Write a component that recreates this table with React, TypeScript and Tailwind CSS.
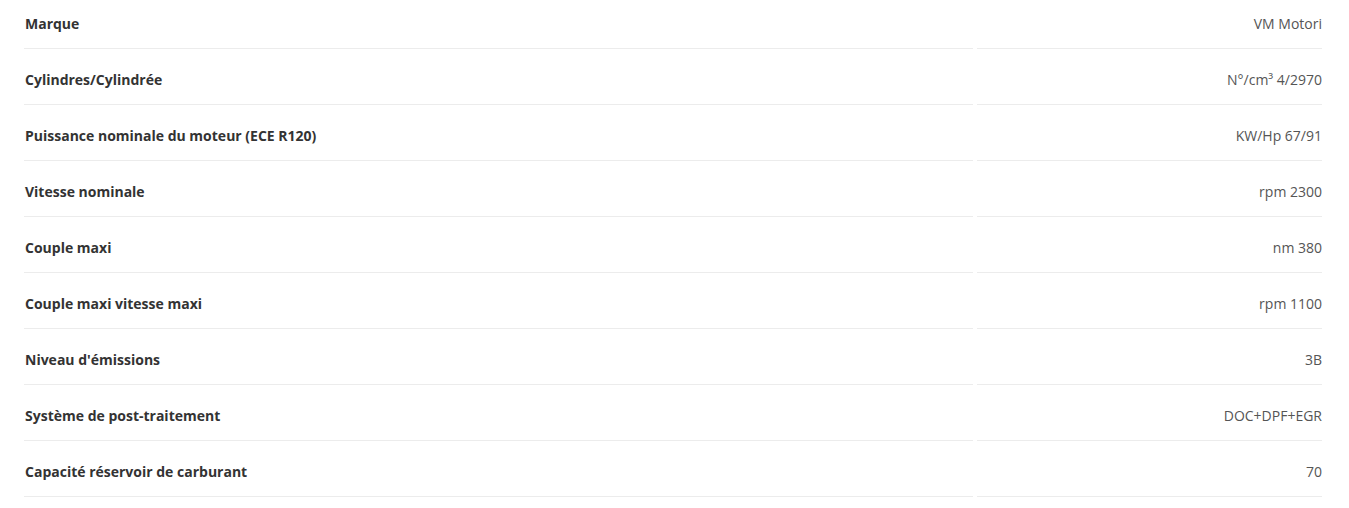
const specs = [
  { label: 'Marque', value: 'VM Motori' },
  { label: 'Cylindres/Cylindrée', value: 'N°/cm³ 4/2970' },
  { label: 'Puissance nominale du moteur (ECE R120)', value: 'KW/Hp 67/91' },
  { label: 'Vitesse nominale', value: 'rpm 2300' },
  { label: 'Couple maxi', value: 'nm 380' },
  { label: 'Couple maxi vitesse maxi', value: 'rpm 1100' },
  { label: "Niveau d'émissions", value: '3B' },
  { label: 'Système de post-traitement', value: 'DOC+DPF+EGR' },
  { label: 'Capacité réservoir de carburant', value: '70' },
]

export default function App() {
  return (
    <div className="min-h-screen bg-white font-['Open_Sans',sans-serif] text-[14px] leading-[20px]">
      {/* Spec table */}
      <div className="-mt-[7px] ml-[24px] grid w-[1298px] grid-cols-[949px_345px] gap-x-[4px]">
        {specs.map((row) => (
          <div key={row.label} className="contents">
            <div className="border-b border-[#ececec] pt-[21px] pb-[14px] pl-[1px] font-bold text-[#333]">
              {row.label}
            </div>
            <div className="border-b border-[#ececec] pt-[21px] pb-[14px] text-right text-[#555]">
              {row.value}
            </div>
          </div>
        ))}
      </div>
    </div>
  )
}
